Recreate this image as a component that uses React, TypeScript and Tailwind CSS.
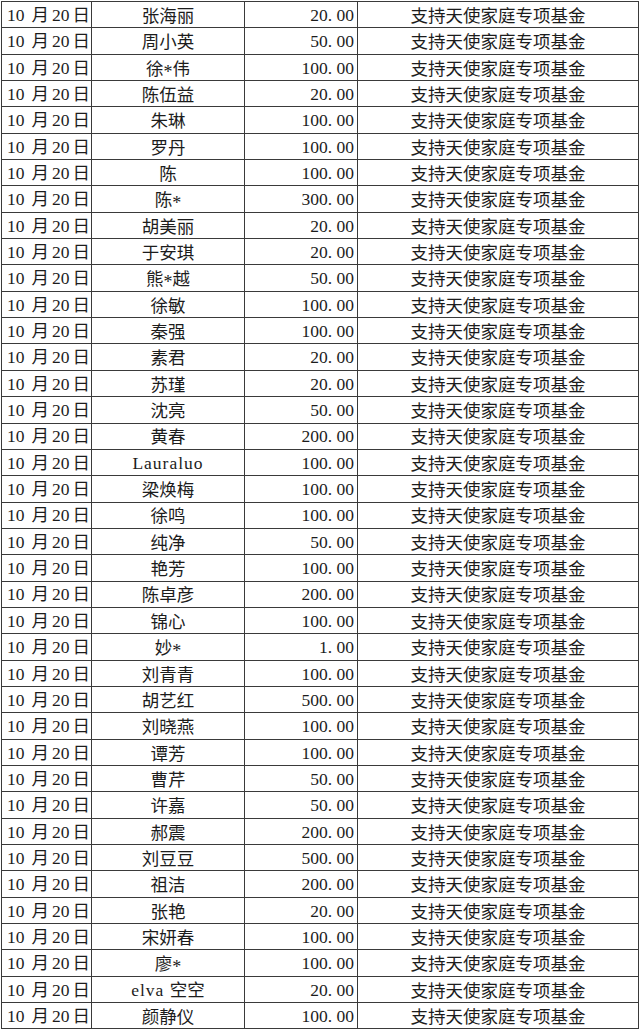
import React from 'react';

type Row = { name: string; amount: string };

const rows: Row[] = [
  { name: '张海丽', amount: '20.00' },
  { name: '周小英', amount: '50.00' },
  { name: '徐*伟', amount: '100.00' },
  { name: '陈伍益', amount: '20.00' },
  { name: '朱琳', amount: '100.00' },
  { name: '罗丹', amount: '100.00' },
  { name: '陈', amount: '100.00' },
  { name: '陈*', amount: '300.00' },
  { name: '胡美丽', amount: '20.00' },
  { name: '于安琪', amount: '20.00' },
  { name: '熊*越', amount: '50.00' },
  { name: '徐敏', amount: '100.00' },
  { name: '秦强', amount: '100.00' },
  { name: '素君', amount: '20.00' },
  { name: '苏瑾', amount: '20.00' },
  { name: '沈亮', amount: '50.00' },
  { name: '黄春', amount: '200.00' },
  { name: 'Lauraluo', amount: '100.00' },
  { name: '梁焕梅', amount: '100.00' },
  { name: '徐鸣', amount: '100.00' },
  { name: '纯净', amount: '50.00' },
  { name: '艳芳', amount: '100.00' },
  { name: '陈卓彦', amount: '200.00' },
  { name: '锦心', amount: '100.00' },
  { name: '妙*', amount: '1.00' },
  { name: '刘青青', amount: '100.00' },
  { name: '胡艺红', amount: '500.00' },
  { name: '刘晓燕', amount: '100.00' },
  { name: '谭芳', amount: '100.00' },
  { name: '曹芹', amount: '50.00' },
  { name: '许嘉', amount: '50.00' },
  { name: '郝震', amount: '200.00' },
  { name: '刘豆豆', amount: '500.00' },
  { name: '祖洁', amount: '200.00' },
  { name: '张艳', amount: '20.00' },
  { name: '宋妍春', amount: '100.00' },
  { name: '廖*', amount: '100.00' },
  { name: 'elva 空空', amount: '20.00' },
  { name: '颜静仪', amount: '100.00' },
];

const serif = "font-['Liberation_Serif',serif]";

// SimSun-ish: latin is half-width serif, asterisk sits mid-line
const Mixed: React.FC<{ text: string }> = ({ text }) => {
  const parts = text.match(/[0-9]+|\.|\*|[A-Za-z ]+|[^\x00-\x7f]+/g) ?? [];
  return (
    <>
      {parts.map((p, i) => {
        if (/^[0-9]+$/.test(p)) return <span key={i} className={serif}>{p}</span>;
        if (p === '.')
          return (
            <span key={i} className={`${serif} inline-block w-[8.75px] text-left`}>
              .
            </span>
          );
        if (p === '*')
          return (
            <span
              key={i}
              className={`${serif} relative top-[3px] text-[18px] leading-[12px] inline-block w-[9px] h-[12px] text-center`}
            >
              *
            </span>
          );
        if (/^[A-Za-z ]+$/.test(p))
          return (
            <span key={i} className={`${serif} tracking-[1px] whitespace-pre`}>
              {p}
            </span>
          );
        return <span key={i}>{p}</span>;
      })}
    </>
  );
};

const DateCell = () => (
  <div className="pl-[5px] whitespace-nowrap">
    <span className={serif}>10</span>
    <span className="ml-[7px]">月</span>
    <span className={`${serif} ml-[3px]`}>20</span>
    <span className="ml-[3px]">日</span>
  </div>
);

export default function App() {
  return (
    <div className="w-[640px] h-[1031px] bg-white pl-[1px] pt-[1px] text-[#1c1c1c] font-['Noto_Sans_CJK_SC',sans-serif] text-[17.5px] leading-none">
      <table className="table-fixed border-collapse w-[637px]">
        <colgroup>
          <col className="w-[90px]" />
          <col className="w-[153px]" />
          <col className="w-[113px]" />
          <col className="w-[281px]" />
        </colgroup>
        <tbody>
          {rows.map((r, i) => (
            <tr key={i} className="h-[26.35px]">
              <td className="border border-[#3a3a3a] p-0 align-middle">
                <DateCell />
              </td>
              <td className="border border-[#3a3a3a] p-0 text-center align-middle whitespace-nowrap">
                <Mixed text={r.name} />
              </td>
              <td className="border border-[#3a3a3a] p-0 pr-[3px] text-right align-middle whitespace-nowrap">
                <Mixed text={r.amount} />
              </td>
              <td className="border border-[#3a3a3a] p-0 text-center align-middle">
                支持天使家庭专项基金
              </td>
            </tr>
          ))}
        </tbody>
      </table>
    </div>
  );
}
